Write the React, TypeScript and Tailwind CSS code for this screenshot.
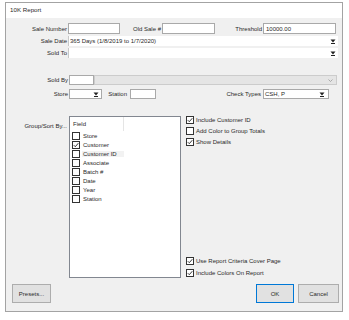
import React from 'react';

const font = { fontFamily: '"Liberation Sans", Arial, sans-serif' };

const Arrow: React.FC = () => (
  <svg width="6" height="5" viewBox="0 0 6 5" className="shrink-0">
    <path d="M0.5 0.5h5L3 3.5z" fill="#222" />
    <rect x="1" y="4" width="4" height="1" fill="#222" />
  </svg>
);

const Check: React.FC<{ checked?: boolean }> = ({ checked }) => (
  <span className="w-[8px] h-[8px] border border-[#333] bg-white flex items-center justify-center shrink-0">
    {checked && (
      <svg width="6" height="6" viewBox="0 0 6 6">
        <path d="M0.8 3.2l1.5 1.5L5.3 1.2" stroke="#222" strokeWidth="0.9" fill="none" />
      </svg>
    )}
  </span>
);

const Label: React.FC<{ w: string; children: React.ReactNode }> = ({ w, children }) => (
  <span className={`${w} text-right pr-[1px] whitespace-nowrap`}>{children}</span>
);

const fields = ['Store', 'Customer', 'Customer ID', 'Associate', 'Batch #', 'Date', 'Year', 'Station'];

export default function App() {
  return (
    <div className="w-[349px] h-[320px] bg-white text-[6px] text-[#2a2a2a] leading-none" style={font}>
      <div className="ml-[5px] mt-[2px] w-[338px] h-[310px] border border-[#a3a3a3] flex flex-col">
        {/* title bar */}
        <div className="h-[15px] bg-white flex items-center pl-[4px] text-[6.2px]">10K Report</div>

        <div className="flex-1 bg-[#f0f0f0] flex flex-col">
          {/* numbers row */}
          <div className="mt-[5px] h-[11px] flex items-center">
            <Label w="w-[62px]">Sale Number</Label>
            <div className="w-[52px] h-[11px] bg-white border border-[#a9a9a9]" />
            <Label w="w-[42px]">Old Sale #</Label>
            <div className="w-[53px] h-[11px] bg-white border border-[#a9a9a9]" />
            <Label w="w-[48px]">Threshold</Label>
            <div className="w-[73px] h-[11px] bg-white border border-[#a9a9a9] pl-[2px] flex items-center">10000.00</div>
          </div>

          <div className="mt-[2px] h-[10px] flex items-center">
            <Label w="w-[62px]">Sale Date</Label>
            <div className="w-[270px] h-[10px] bg-white border-l border-[#c8c8c8] pl-[1px] pr-[2px] flex items-center justify-between">
              <span>365 Days (1/8/2019 to 1/7/2020)</span>
              <Arrow />
            </div>
          </div>

          <div className="mt-[2px] h-[10px] flex items-center">
            <Label w="w-[62px]">Sold To</Label>
            <div className="w-[270px] h-[10px] bg-white border-l border-[#c8c8c8] pr-[2px] flex items-center justify-end">
              <Arrow />
            </div>
          </div>

          <div className="mt-[17px] h-[10px] flex items-center">
            <Label w="w-[63px]">Sold By</Label>
            <div className="w-[25px] h-[10px] bg-white border border-[#a9a9a9]" />
            <div className="w-[243px] h-[10px] bg-[#e5e5e5] border border-[#cccccc] flex items-center justify-end pr-[3px]">
              <svg width="5" height="3" viewBox="0 0 5 3">
                <path d="M0.5 0.5L2.5 2.5L4.5 0.5" stroke="#9a9a9a" strokeWidth="0.8" fill="none" />
              </svg>
            </div>
          </div>

          <div className="mt-[4px] h-[10px] flex items-center">
            <Label w="w-[63px]">Store</Label>
            <div className="w-[33px] h-[10px] bg-white border border-[#a9a9a9] flex items-center justify-end pr-[2px]">
              <Arrow />
            </div>
            <Label w="w-[26px]">Station</Label>
            <div className="ml-[2px] w-[26px] h-[10px] bg-white border border-[#a9a9a9]" />
            <Label w="w-[106px]">Check Types</Label>
            <div className="ml-[1px] w-[66px] h-[10px] bg-white border border-[#a9a9a9] flex items-center justify-between pl-[1px] pr-[3px]">
              <span>CSH, P</span>
              <Arrow />
            </div>
          </div>

          {/* group / sort */}
          <div className="mt-[17px] h-[162px] flex">
            <Label w="w-[62px] pt-[7px]">Group/Sort By...</Label>
            <div className="ml-[1px] w-[112px] h-[162px] bg-white border border-[#828790] flex flex-col">
              <div className="h-[14px] flex items-center pl-[3px] relative">
                <span>Field</span>
                <span className="absolute left-[53px] top-0 h-[14px] border-l border-[#e5e5e5]" />
              </div>
              {fields.map((f) => (
                <div key={f} className="h-[9px] flex items-center pl-[2px] gap-[2px]">
                  <Check checked={f === 'Customer'} />
                  <span className={f === 'Customer ID' ? 'bg-[#f2f2f2] w-[42px] pl-[1px]' : 'pl-[1px]'}>{f}</span>
                </div>
              ))}
            </div>

            <div className="ml-[5px] flex flex-col">
              {['Include Customer ID', 'Add Color to Group Totals', 'Show Details'].map((t, i) => (
                <div key={t} className={`h-[10px] flex items-center gap-[2px] ${i === 0 ? 'mt-[-1px]' : 'mt-[1px]'}`}>
                  <Check checked={i !== 1} />
                  <span>{t}</span>
                </div>
              ))}
              <div className="mt-[109px] h-[10px] flex items-center gap-[2px]">
                <Check checked />
                <span>Use Report Criteria Cover Page</span>
              </div>
              <div className="mt-[2px] h-[10px] flex items-center gap-[2px]">
                <Check checked />
                <span>Include Colors On Report</span>
              </div>
            </div>
          </div>

          {/* buttons */}
          <div className="mt-[6px] h-[19px] flex">
            <button className="ml-[6px] w-[39px] h-[19px] bg-[#e1e1e1] border border-[#adadad] text-[6px]">Presets...</button>
            <div className="flex-1" />
            <button className="w-[38px] h-[19px] bg-[#e1e1e1] border border-[#0078d7] text-[6px]">OK</button>
            <button className="ml-[4px] mr-[3px] w-[41px] h-[19px] bg-[#e1e1e1] border border-[#adadad] text-[6px]">Cancel</button>
          </div>
        </div>
      </div>
    </div>
  );
}
